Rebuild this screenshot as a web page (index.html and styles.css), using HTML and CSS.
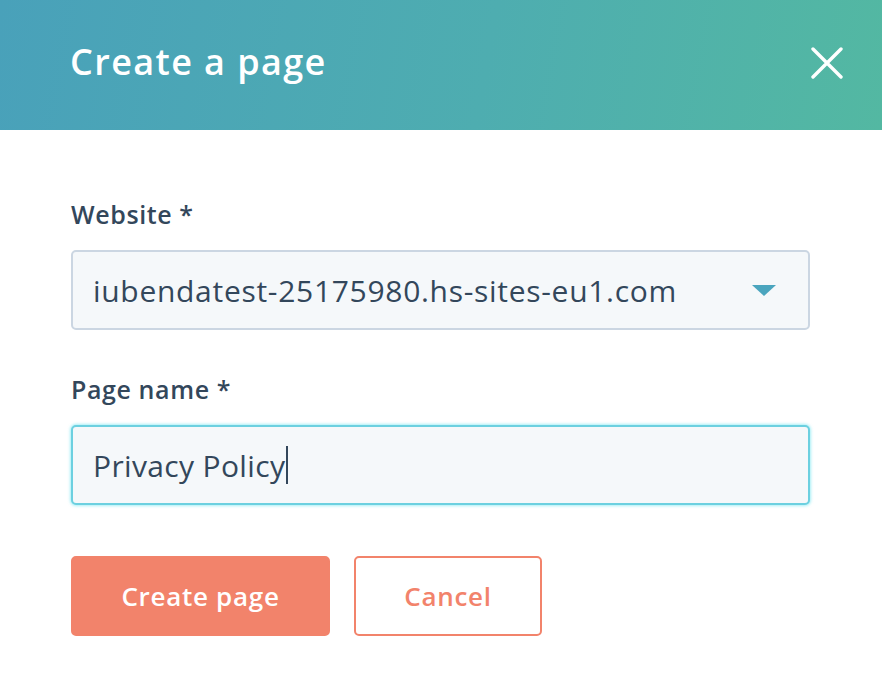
FILE: index.html
```html
<!DOCTYPE html>
<html lang="en">
<head>
<meta charset="utf-8">
<title>Create a page</title>
<link rel="stylesheet" href="styles.css">
</head>
<body>
<div class="modal">
  <header class="modal-header">
    <h1 class="modal-title">Create a page</h1>
    <button class="close" aria-label="Close">
      <svg width="32" height="32" viewBox="0 0 32 32"><path d="M2 2 L30 30 M30 2 L2 30" stroke="#fff" stroke-width="3.4" stroke-linecap="round" fill="none"/></svg>
    </button>
  </header>
  <main class="modal-body">
    <div class="field">
      <label class="label">Website *</label>
      <div class="select">
        <span class="select-value">iubendatest-25175980.hs-sites-eu1.com</span>
        <span class="caret"></span>
      </div>
    </div>
    <div class="field">
      <label class="label">Page name *</label>
      <div class="input focused"><span>Privacy Policy</span><span class="cursor"></span></div>
    </div>
    <div class="actions">
      <button class="btn btn-primary">Create page</button>
      <button class="btn btn-secondary">Cancel</button>
    </div>
  </main>
</div>
</body>
</html>
```
FILE: styles.css
```css
* { box-sizing: border-box; }
html, body { margin: 0; padding: 0; background: #fff; }
body { font-family: "Open Sans", "Lato", sans-serif; color: #33475b; width: 882px; height: 674px; overflow: hidden; }
.modal-header {
  height: 130px;
  background: linear-gradient(100deg, #49a1ba 0%, #4eadb0 55%, #53b8a2 100%);
  display: flex;
  align-items: center;
  justify-content: space-between;
  padding: 0 39px 0 70px;
}
.modal-title {
  margin: 0;
  color: #fff;
  font-weight: 600;
  font-size: 36px;
  letter-spacing: 1.4px;
  line-height: 40px;
  position: relative;
  top: -3px;
}
.close {
  background: none; border: 0; padding: 0; display: flex;
  width: 32px; height: 32px;
  position: relative; top: -2px;
}
.modal-body { padding: 68px 72px 0 71px; }
.field { display: flex; flex-direction: column; }
.field + .field { margin-top: 43px; }
.label { font-size: 25px; font-weight: 600; letter-spacing: 0.6px; line-height: 32px; margin-bottom: 20px; color: #33475b; }
.select, .input {
  height: 80px;
  border: 2px solid #cbd6e2;
  border-radius: 5px;
  background: #f5f8fa;
  display: flex;
  align-items: center;
  padding: 0 32px 0 20px;
  font-size: 30px;
  letter-spacing: 0.7px;
  color: #33475b;
}
.select { justify-content: space-between; }
.caret {
  width: 0; height: 0;
  border-left: 12px solid transparent;
  border-right: 12px solid transparent;
  border-top: 11px solid #4aa5be;
}
.input { letter-spacing: 0.35px; }
.input.focused {
  border-color: #6cd0e0;
  box-shadow: 0 0 3px 1px rgba(0, 208, 228, 0.35);
}
.cursor { display: inline-block; width: 2px; height: 38px; background: #33475b; margin-left: 1px; }
.actions { display: flex; gap: 24px; margin-top: 51px; }
.btn {
  height: 80px;
  border-radius: 5px;
  font-family: inherit;
  font-size: 26px;
  font-weight: 600;
  letter-spacing: 0.7px;
  padding: 0;
  cursor: pointer;
}
.btn-primary { width: 259px; background: #f2836b; border: 2px solid #f2836b; color: #fff; }
.btn-secondary { width: 188px; background: #fff; border: 2px solid #f2836b; color: #f2836b; }
```
